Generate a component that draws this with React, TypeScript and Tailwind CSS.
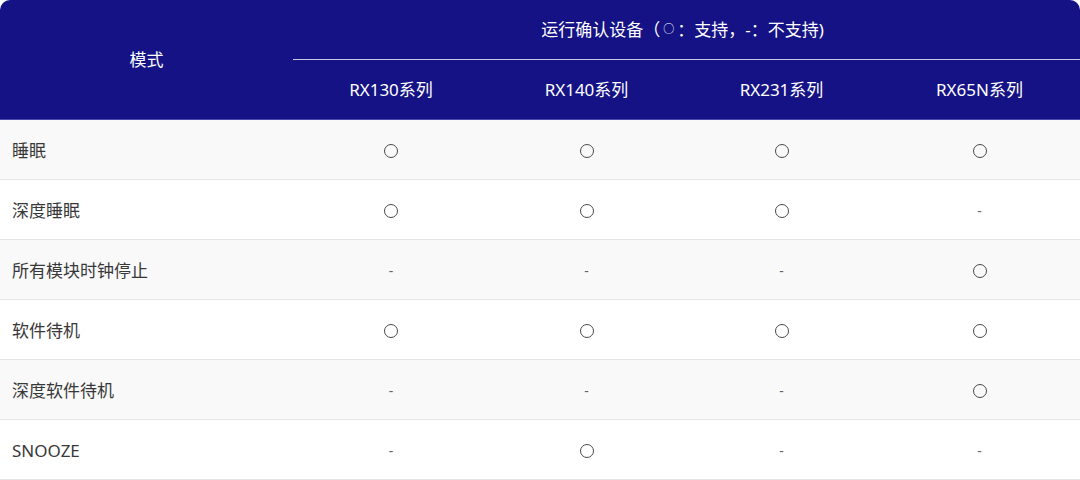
const COLS = ["RX130系列", "RX140系列", "RX231系列", "RX65N系列"];

const ROWS: Array<{ mode: string; support: boolean[] }> = [
  { mode: "睡眠", support: [true, true, true, true] },
  { mode: "深度睡眠", support: [true, true, true, false] },
  { mode: "所有模块时钟停止", support: [false, false, false, true] },
  { mode: "软件待机", support: [true, true, true, true] },
  { mode: "深度软件待机", support: [false, false, false, true] },
  { mode: "SNOOZE", support: [false, true, false, false] },
];

export default function App() {
  return (
    <div
      className="w-[1080px] h-[480px] bg-white overflow-hidden text-[17px]"
      style={{ fontFamily: '"Noto Sans", "Noto Sans CJK SC", sans-serif' }}
    >
      {/* header */}
      <div className="grid grid-cols-[293px_1fr] h-[120px] bg-[#141285] text-white rounded-t-[10px] border-b border-[#4a48a8]">
        <div className="flex items-center justify-center">模式</div>
        <div className="flex flex-col">
          <div className="h-[60px] flex items-center justify-center border-b border-[#c9c8e4] pr-[8px]">
            运行确认设备（<span className="text-[11px] mx-[3px]">○</span>：支持，-：不支持)
          </div>
          <div className="flex-1 grid grid-cols-[196px_195px_195px_1fr]">
            {COLS.map((c) => (
              <div key={c} className="flex items-center justify-center">
                {c}
              </div>
            ))}
          </div>
        </div>
      </div>

      {/* body */}
      {ROWS.map((row, i) => (
        <div
          key={row.mode}
          className={`grid grid-cols-[293px_196px_195px_195px_1fr] h-[60px] pt-[2px] border-b border-[#e4e4e4] text-[#383838] ${
            i % 2 === 0 ? "bg-[#f9f9f9]" : "bg-white"
          }`}
        >
          <div className="flex items-center pl-[12px]">{row.mode}</div>
          {row.support.map((s, j) => (
            <div key={j} className="flex items-center justify-center">
              {s ? (
                <span className="inline-block w-[14px] h-[14px] rounded-full border-[1.5px] border-[#4a4a4a]" />
              ) : (
                <span className="text-[#666] text-[14px]">-</span>
              )}
            </div>
          ))}
        </div>
      ))}
    </div>
  );
}
